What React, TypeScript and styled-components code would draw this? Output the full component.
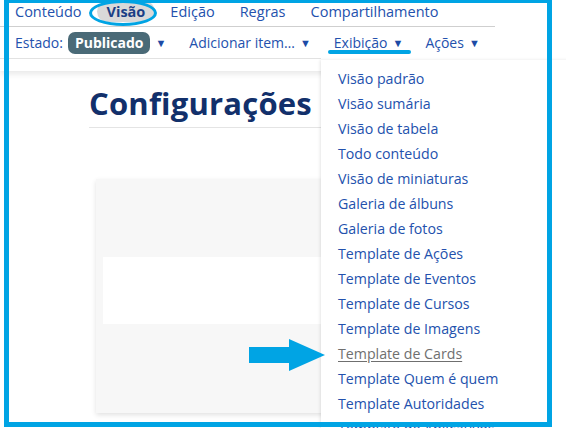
import React from 'react';
import styled, { createGlobalStyle } from 'styled-components';

const GlobalStyle = createGlobalStyle`
  html, body {
    margin: 0;
    padding: 0;
    background: #ffffff;
  }
  body {
    font-family: "Open Sans", Lato, sans-serif;
  }
`;

const LINK = '#2351ad';
const MARK = '#00a4e4';

const Page = styled.div`
  position: relative;
  width: 566px;
  height: 428px;
  overflow: hidden;
  background: #ffffff;
`;

const Toolbar = styled.div`
  height: 71px;
  background: #ffffff;
  box-shadow: 0 3px 6px rgba(0, 0, 0, 0.09);
`;

const TabRow = styled.div`
  display: flex;
  align-items: center;
  width: 495px;
  height: 27px;
  padding: 0 0 3px 5px;
  box-sizing: border-box;
  border-bottom: 1px solid #cfcfcf;
`;

const Tab = styled.span<{ $active?: boolean }>`
  display: inline-flex;
  align-items: center;
  height: 21px;
  padding: 0 10px;
  margin-right: 5px;
  border-radius: 11px;
  font-size: 14.5px;
  color: ${(p) => (p.$active ? '#1b3f86' : LINK)};
  font-weight: ${(p) => (p.$active ? 700 : 400)};
  background: ${(p) => (p.$active ? '#d9d9d9' : 'transparent')};
`;

const SubBar = styled.div`
  display: flex;
  align-items: center;
  width: 321px;
  height: 32px;
  padding-left: 15px;
  box-sizing: border-box;
  border-bottom: 1px solid #e2e2e2;
  white-space: nowrap;
`;

const MenuLabel = styled.span<{ $gap?: number }>`
  display: inline-flex;
  align-items: center;
  margin-right: ${(p) => p.$gap ?? 0}px;
  font-size: 14px;
  color: ${LINK};
`;

const Caret = styled.span`
  font-size: 11px;
  margin-left: 5px;
  color: #1d4aa6;
`;

const Badge = styled.span`
  display: inline-flex;
  align-items: center;
  height: 22px;
  margin-left: 5px;
  padding: 0 7px;
  border-radius: 7px;
  background: #4a6a77;
  color: #ffffff;
  font-weight: 700;
  font-size: 14px;
`;

const Content = styled.div`
  padding: 14px 0 0 89px;
`;

const Heading = styled.h1`
  margin: 0;
  width: 250px;
  padding-bottom: 6px;
  border-bottom: 1px solid #e4e4e4;
  font-size: 31px;
  line-height: 36px;
  letter-spacing: 0.2px;
  font-weight: 700;
  color: #12306b;
  white-space: nowrap;
`;

const Card = styled.div`
  margin: 51px 0 0 7px;
  width: 300px;
  height: 234px;
  padding-top: 78px;
  box-sizing: border-box;
  background: #f7f7f7;
  box-shadow: 0 2px 5px rgba(0, 0, 0, 0.12);
`;

const CardStrip = styled.div`
  margin-left: 7px;
  height: 67px;
  background: #ffffff;
`;

const Dropdown = styled.ul`
  position: absolute;
  left: 321px;
  top: 60px;
  width: 260px;
  height: 380px;
  margin: 0;
  padding: 6px 0 0 17px;
  box-sizing: border-box;
  list-style: none;
  background: #ffffff;
  box-shadow: -1px 0 3px rgba(0, 0, 0, 0.1);
`;

const DropItem = styled.li<{ $muted?: boolean }>`
  height: 25px;
  line-height: 25px;
  font-size: 14.2px;
  white-space: nowrap;
  color: ${(p) => (p.$muted ? '#6f6f6f' : LINK)};
  text-decoration: ${(p) => (p.$muted ? 'underline' : 'none')};
  text-underline-offset: 2px;
`;

const Frame = styled.div`
  position: absolute;
  left: 4px;
  top: -2px;
  width: 548px;
  height: 429px;
  box-sizing: border-box;
  border: 5px solid ${MARK};
  pointer-events: none;
`;

const Ring = styled.div`
  position: absolute;
  left: 89px;
  top: 0px;
  width: 68px;
  height: 26px;
  box-sizing: border-box;
  border: 3px solid ${MARK};
  border-radius: 50%;
`;

const Underline = styled.div`
  position: absolute;
  left: 328px;
  top: 50px;
  width: 83px;
  height: 4px;
  border-radius: 2px;
  background: ${MARK};
`;

const Arrow = styled.svg`
  position: absolute;
  left: 248px;
  top: 338px;
`;

const tabs = ['Conteúdo', 'Visão', 'Edição', 'Regras', 'Compartilhamento'];

const views = [
  'Visão padrão',
  'Visão sumária',
  'Visão de tabela',
  'Todo conteúdo',
  'Visão de miniaturas',
  'Galeria de álbuns',
  'Galeria de fotos',
  'Template de Ações',
  'Template de Eventos',
  'Template de Cursos',
  'Template de Imagens',
  'Template de Cards',
  'Template Quem é quem',
  'Template Autoridades',
  'Template de Aplicativos',
];

export default function App() {
  return (
    <Page>
      <GlobalStyle />
      <Toolbar>
        <TabRow>
          {tabs.map((t) => (
            <Tab key={t} $active={t === 'Visão'}>
              {t}
            </Tab>
          ))}
        </TabRow>
        <SubBar>
          <MenuLabel>Estado:</MenuLabel>
          <Badge>Publicado</Badge>
          <MenuLabel $gap={23}>
            <Caret>▼</Caret>
          </MenuLabel>
          <MenuLabel $gap={23}>
            Adicionar item…<Caret>▼</Caret>
          </MenuLabel>
          <MenuLabel $gap={22}>
            Exibição<Caret>▼</Caret>
          </MenuLabel>
          <MenuLabel>
            Ações<Caret>▼</Caret>
          </MenuLabel>
        </SubBar>
      </Toolbar>

      <Content>
        <Heading>Configurações</Heading>
        <Card>
          <CardStrip />
        </Card>
      </Content>

      <Dropdown>
        {views.map((v) => (
          <DropItem key={v} $muted={v === 'Template de Cards'}>
            {v}
          </DropItem>
        ))}
      </Dropdown>

      <Arrow width="78" height="34" viewBox="0 0 78 34">
        <path d="M1 9 H41 V1 L77 17 L41 33 V25 H1 Z" fill={MARK} strokeLinejoin="round" />
      </Arrow>
      <Ring />
      <Underline />
      <Frame />
    </Page>
  );
}
